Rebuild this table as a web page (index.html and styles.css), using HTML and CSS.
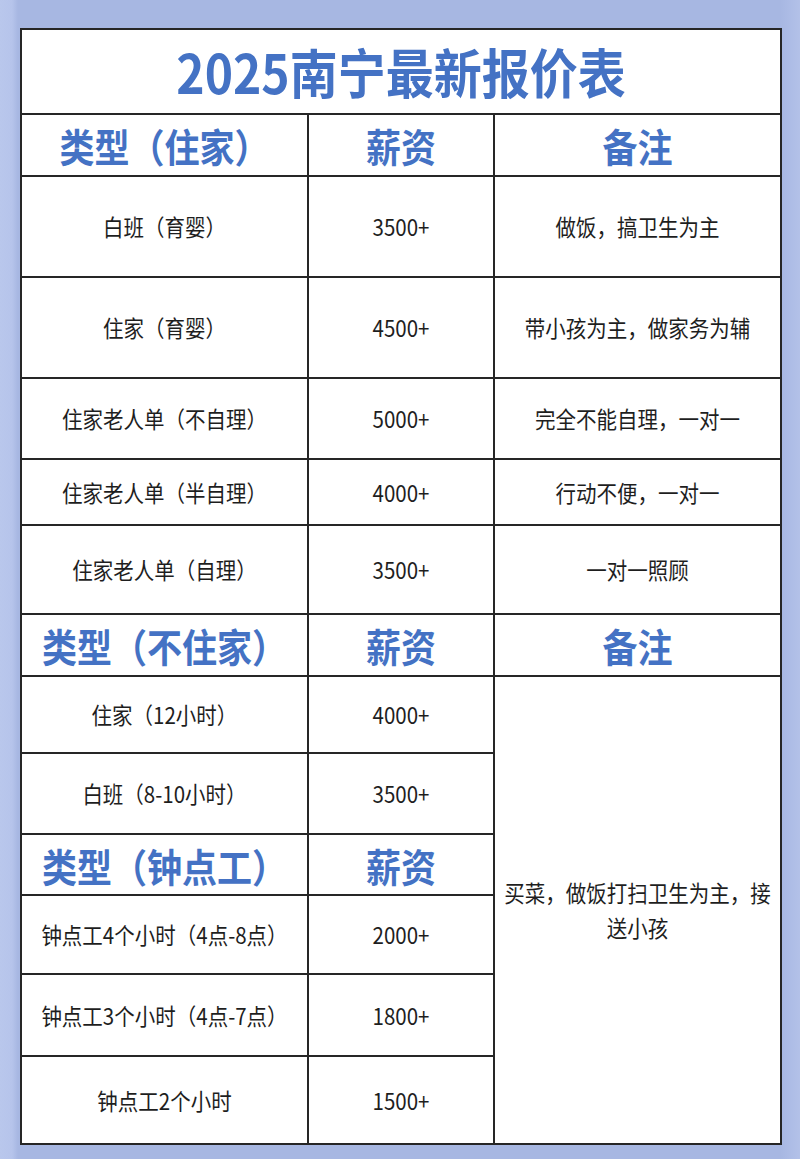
FILE: index.html
```html
<!DOCTYPE html>
<html lang="zh-CN">
<head>
<meta charset="utf-8">
<title>2025南宁最新报价表</title>
<link rel="stylesheet" href="styles.css">
</head>
<body>
<div class="page">
  <table class="price">
    <colgroup>
      <col class="c1"><col class="c2"><col class="c3">
    </colgroup>
    <tr class="h-title"><td colspan="3" class="title"><span class="t">2025南宁最新报价表</span></td></tr>
    <tr class="h-head"><td class="head"><span class="t">类型（住家）</span></td><td class="head"><span class="t">薪资</span></td><td class="head"><span class="t">备注</span></td></tr>
    <tr class="h101"><td><span class="t">白班（育婴）</span></td><td><span class="t">3500+</span></td><td><span class="t">做饭，搞卫生为主</span></td></tr>
    <tr class="h101"><td><span class="t">住家（育婴）</span></td><td><span class="t">4500+</span></td><td><span class="t">带小孩为主，做家务为辅</span></td></tr>
    <tr class="h81"><td><span class="t">住家老人单（不自理）</span></td><td><span class="t">5000+</span></td><td><span class="t">完全不能自理，一对一</span></td></tr>
    <tr class="h66"><td><span class="t">住家老人单（半自理）</span></td><td><span class="t">4000+</span></td><td><span class="t">行动不便，一对一</span></td></tr>
    <tr class="h89"><td><span class="t">住家老人单（自理）</span></td><td><span class="t">3500+</span></td><td><span class="t">一对一照顾</span></td></tr>
    <tr class="h-head"><td class="head"><span class="t">类型（不住家）</span></td><td class="head"><span class="t">薪资</span></td><td class="head"><span class="t">备注</span></td></tr>
    <tr class="h77"><td><span class="t">住家（12小时）</span></td><td><span class="t">4000+</span></td><td rowspan="6" class="remark"><span class="t">买菜，做饭打扫卫生为主，接送小孩</span></td></tr>
    <tr class="h81"><td><span class="t">白班（8-10小时）</span></td><td><span class="t">3500+</span></td></tr>
    <tr class="h61"><td class="head"><span class="t">类型（钟点工）</span></td><td class="head"><span class="t">薪资</span></td></tr>
    <tr class="h79"><td><span class="t">钟点工4个小时（4点-8点）</span></td><td><span class="t">2000+</span></td></tr>
    <tr class="h82"><td><span class="t">钟点工3个小时（4点-7点）</span></td><td><span class="t">1800+</span></td></tr>
    <tr class="h88"><td><span class="t">钟点工2个小时</span></td><td><span class="t">1500+</span></td></tr>
  </table>
</div>
</body>
</html>
```

FILE: styles.css
```css
html, body {
  margin: 0;
  padding: 0;
}
body {
  width: 800px;
  height: 1159px;
  overflow: hidden;
  background: linear-gradient(to right, #b9c7ec 0, #b6c4eb 12px, #a7b7e2 18px, #a7b7e2 780px, #aebde6 792px, #b3c1e8 800px);
  font-family: "Noto Sans CJK SC", "Noto Sans", sans-serif;
}
.page {
  padding: 28px 0 0 20px;
}
.price {
  border-collapse: collapse;
  table-layout: fixed;
  width: 760px;
  background: #ffffff;
  border: 2px solid #262626;
}
.c1 { width: 287px; }
.c2 { width: 186px; }
.c3 { width: 287px; }
.price td {
  border: 2px solid #262626;
  padding: 0;
  text-align: center;
  vertical-align: middle;
  color: #1e1e1e;
  font-size: 20.5px;
  line-height: 1.2;
}
.t {
  display: inline-block;
  transform: scaleY(1.12);
}
.price td.title {
  color: #4472c4;
  font-size: 48px;
  font-weight: 700;
}
.price td.head {
  color: #4472c4;
  font-size: 35px;
  font-weight: 700;
}
.price td.remark {
  padding: 0 6px;
  line-height: 31px;
}
.h-title { height: 85px; }
.h-head { height: 62px; }
.h101 { height: 101px; }
.h81 { height: 81px; }
.h66 { height: 66px; }
.h89 { height: 89px; }
.h77 { height: 77px; }
.h61 { height: 61px; }
.h79 { height: 79px; }
.h82 { height: 82px; }
.h88 { height: 88px; }
```
